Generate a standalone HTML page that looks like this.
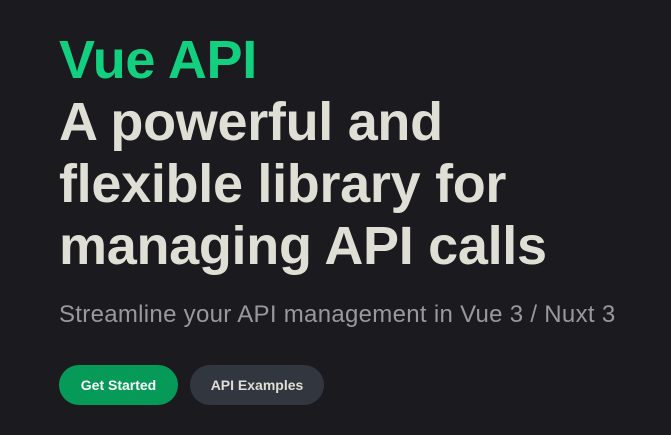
<!DOCTYPE html>
<html><head><meta charset="utf-8"><style>
html,body{margin:0;padding:0;background:#1b1b1f;width:671px;height:435px;overflow:hidden}
body{font-family:"Liberation Sans",sans-serif;}
.wrap{position:absolute;left:59px;top:29px;}
h1{margin:0;font-size:54px;line-height:62px;font-weight:700;letter-spacing:-0.3px;color:#dfdfd6;width:620px;white-space:nowrap}
.name{color:#12d07f;display:block}
.tag{position:absolute;left:59px;top:300px;font-size:24px;line-height:30px;letter-spacing:0.3px;color:#98989f;white-space:nowrap}
.btn{position:absolute;top:365px;height:40px;line-height:40px;border-radius:20px;font-size:14px;font-weight:700;text-align:center}
.b1{left:59px;width:119px;background:#059a57;color:#fff}
.b2{left:190px;width:134px;background:#32363f;color:#dfdfd6}
</style></head><body>
<div class="wrap"><h1><span class="name">Vue API</span>A powerful and<br>flexible library for<br>managing API calls</h1></div>
<div class="tag">Streamline your API management in Vue 3 / Nuxt 3</div>
<div class="btn b1">Get Started</div>
<div class="btn b2">API Examples</div>
</body></html>
